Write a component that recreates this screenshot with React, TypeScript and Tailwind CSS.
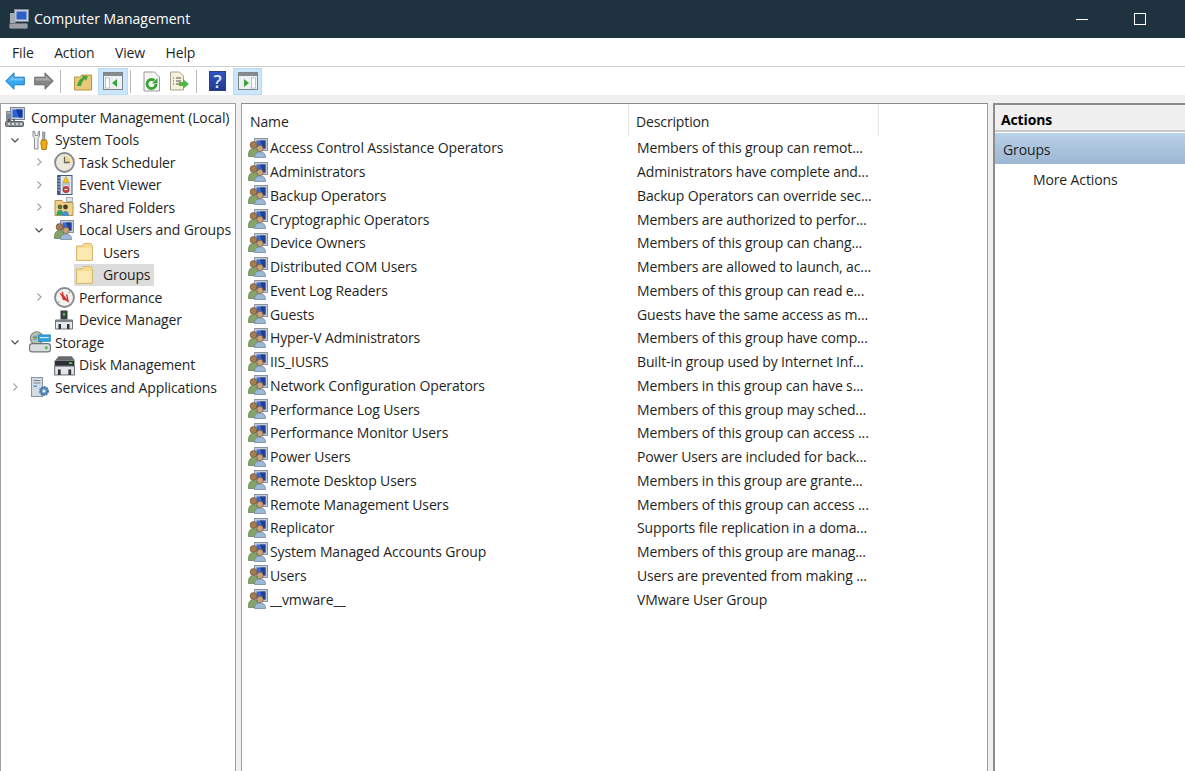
import type { ReactNode } from "react";

const font = { fontFamily: '"Open Sans", "Noto Sans", sans-serif' };

function Ico({ size = 20, children }: { size?: number; children: ReactNode }) {
  return (
    <svg width={size} height={size} viewBox="0 0 20 20" className="shrink-0">
      {children}
    </svg>
  );
}

function ComputerIcon() {
  return (
    <Ico>
      <rect x="5.5" y="0.5" width="14" height="12" fill="#c9d0d8" stroke="#7c8694" />
      <rect x="7.5" y="2.5" width="10" height="8" fill="#2d62d6" />
      <path d="M11 2.5h6.5v8H14z" fill="#173a9e" />
      <rect x="1" y="4" width="5.5" height="10" fill="#7f8b92" />
      <rect x="2" y="5.5" width="3.5" height="1" fill="#c4ccd2" />
      <path d="M4 12v3M9 12v3" stroke="#323b42" strokeWidth="1.2" />
      <rect x="0.5" y="14.5" width="18" height="5" rx="1" fill="#868d92" stroke="#596268" />
      <path d="M3 17h2M7 17h2M11 17h2M15 17h2" stroke="#eef1f3" strokeWidth="1.5" />
    </Ico>
  );
}

function GroupIcon({ size = 20 }: { size?: number }) {
  return (
    <Ico size={size}>
      <rect x="6.5" y="0.5" width="13" height="12" fill="#c6ccd4" stroke="#8a94a0" />
      <rect x="8.5" y="2.5" width="9" height="8" fill="#3a68cf" />
      <path d="M12 2.5h5.500v8H15z" fill="#22408f" />
      <circle cx="5.500" cy="7" r="3.400" fill="#a67c52" stroke="#6e5236" strokeWidth="0.7" />
      <path d="M0.500 17c0-4.500 2-6.500 5-6.500s5 2 5 6.500v1.500h-10z" fill="#86a468" stroke="#5d7a45" strokeWidth="0.7" />
      <circle cx="12" cy="10.500" r="3.200" fill="#cfa27a" stroke="#6e5638" strokeWidth="0.7" />
      <path d="M6.500 19.500c0-4 2-5.500 5.500-5.500s5.500 1.500 5.500 5.500z" fill="#9db9d6" stroke="#637f9e" strokeWidth="0.7" />
    </Ico>
  );
}

function ToolsIcon() {
  return (
    <Ico>
      <path d="M3 1v5l1.500 2.500V19h3.500V8.500L9.500 6V1L8 2v3.500H5V2z" fill="#eceef0" stroke="#80868c" strokeWidth="0.9" />
      <rect x="12.600" y="2" width="2.400" height="8" fill="#a3a9af" stroke="#6e7479" strokeWidth="0.5" />
      <path d="M11.500 10h5l.7 3-1 6.500h-4.400l-1-6.500z" fill="#f1a80f" stroke="#a06c08" strokeWidth="0.8" />
    </Ico>
  );
}

function ClockIcon() {
  return (
    <Ico size={21}>
      <circle cx="10" cy="10" r="9" fill="#eee8d8" stroke="#868b91" strokeWidth="1.8" />
      <path d="M10 10V3.500a6.500 6.500 0 0 1 6.500 6.500z" fill="#f4d98a" />
      <path d="M10 4.500V10h5" fill="none" stroke="#60646a" strokeWidth="1.2" />
    </Ico>
  );
}

function EventIcon() {
  return (
    <Ico>
      <rect x="4" y="0.500" width="14" height="19" fill="#e3e7ec" stroke="#3f5a86" />
      <rect x="3" y="0.500" width="3.500" height="19" fill="#3f5a86" />
      <path d="M3 3h3M3 6h3M3 9h3M3 12h3M3 15h3" stroke="#c7d2e0" strokeWidth="0.8" />
      <path d="M8 9h8M8 11h2M14 11h2" stroke="#8f9aa8" />
      <path d="M12 1.500l3.200 6h-6.400z" fill="#f4c81c" stroke="#a38010" strokeWidth="0.5" />
      <circle cx="12" cy="14.500" r="3.200" fill="#c94646" stroke="#872828" strokeWidth="0.6" />
      <rect x="10.500" y="14" width="3" height="1" fill="#fff" />
    </Ico>
  );
}

function SharedIcon() {
  return (
    <Ico>
      <path d="M1 18.500V3.500h7l1 2h10v13z" fill="#efd28a" stroke="#b3934e" />
      <rect x="12.500" y="0.500" width="6" height="4" fill="#dfe4ea" stroke="#8b98a6" strokeWidth="0.7" />
      <circle cx="6" cy="10" r="2.400" fill="#5a6f3a" />
      <circle cx="11.500" cy="10" r="2.400" fill="#4a3a24" />
      <path d="M2.500 18c0-3 1-5 3.500-5s3.500 2 3.500 5z" fill="#35a06e" />
      <path d="M8 19c0-3 1-5 3.500-5s3.500 2 3.500 5z" fill="#4a90c6" />
    </Ico>
  );
}

function FolderIcon() {
  return (
    <Ico>
      <path d="M1.500 18.500V4h6l1.500-2.500h7L17.500 4v14.500z" fill="#f7dc92" stroke="#d4b96f" />
      <path d="M2.500 6h14v11.500h-14z" fill="#fbe9b2" />
    </Ico>
  );
}

function PerfIcon() {
  return (
    <Ico size={21}>
      <circle cx="10" cy="10" r="9" fill="#f5f3ee" stroke="#868b91" strokeWidth="1.8" />
      <path d="M5 5l5 3.500L15 15l-6-3z" fill="#d6302f" />
      <path d="M8 4.500l1 8M12 7l1.500 7" stroke="#d6302f" strokeWidth="1.3" />
      <path d="M15 4.500l-1 1M4 15l1-1" stroke="#6f9b6f" />
    </Ico>
  );
}

function DeviceIcon() {
  return (
    <Ico>
      <rect x="6.500" y="0.500" width="7" height="9" fill="#3b4145" />
      <rect x="9" y="3" width="2" height="2.500" fill="#5ecb4f" />
      <path d="M1.500 10h17v9h-17z" fill="#e5e7e9" stroke="#6e7378" />
      <rect x="2" y="10" width="16" height="2" fill="#7c8185" />
      <rect x="4.500" y="14" width="2.500" height="5" fill="#2f3438" />
      <rect x="13" y="14" width="2.500" height="5" fill="#2f3438" />
    </Ico>
  );
}

function StorageIcon() {
  return (
    <Ico size={22}>
      <circle cx="7" cy="6.500" r="5.800" fill="#b4c2b7" stroke="#7e8a82" />
      <circle cx="5.500" cy="6" r="2" fill="#77a086" />
      <path d="M8.500 3.500h11v6h-11z" fill="#2fa3e0" stroke="#2177a8" strokeWidth="0.6" />
      <path d="M10 6h8" stroke="#d5effa" />
      <rect x="0.500" y="11.500" width="19" height="7.500" rx="2.500" fill="#d7dcdf" stroke="#6c747a" />
      <rect x="14.500" y="14" width="2.400" height="2.400" fill="#4fc23c" />
    </Ico>
  );
}

function DiskIcon() {
  return (
    <Ico size={22}>
      <path d="M5 2h12l3 4H2z" fill="#666b6f" />
      <rect x="1.500" y="6" width="18" height="5" fill="#2c3033" />
      <rect x="14.500" y="7.500" width="3" height="1.600" fill="#55d04a" />
      <rect x="1.500" y="11" width="18" height="8" fill="#e3e5e7" stroke="#70757a" />
      <rect x="4.500" y="14" width="2.500" height="5" fill="#2f3438" />
      <rect x="14" y="14" width="2.500" height="5" fill="#2f3438" />
    </Ico>
  );
}

function ServicesIcon() {
  return (
    <Ico>
      <rect x="1.500" y="0.500" width="11" height="19" fill="#d5dbe1" stroke="#8693a0" />
      <path d="M3.500 3.500h7M3.500 6h7" stroke="#76838f" />
      <rect x="3.500" y="8.500" width="3.500" height="1.500" fill="#4e9ad8" />
      <circle cx="14" cy="14" r="4" fill="#5b8ec0" stroke="#41709e" strokeWidth="2" strokeDasharray="1.6 1" />
      <circle cx="14" cy="14" r="1.500" fill="#f0f4f8" />
    </Ico>
  );
}

function TreeChevron({ open }: { open: boolean }) {
  return (
    <svg width="10" height="10" viewBox="0 0 10 10" className="shrink-0">
      <path
        d={open ? "M1.5 3.5 5 7l3.5-3.5" : "M3.5 1.5 7 5 3.5 8.5"}
        fill="none"
        stroke={open ? "#4d4d4d" : "#a6a6a6"}
        strokeWidth="1.2"
      />
    </svg>
  );
}

type TreeItem = {
  label: string;
  indent: number;
  icon: ReactNode;
  toggle?: "open" | "closed";
  selected?: boolean;
};

const tree: TreeItem[] = [
  { label: "Computer Management (Local)", indent: 0, icon: <ComputerIcon /> },
  { label: "System Tools", indent: 1, icon: <ToolsIcon />, toggle: "open" },
  { label: "Task Scheduler", indent: 2, icon: <ClockIcon />, toggle: "closed" },
  { label: "Event Viewer", indent: 2, icon: <EventIcon />, toggle: "closed" },
  { label: "Shared Folders", indent: 2, icon: <SharedIcon />, toggle: "closed" },
  { label: "Local Users and Groups", indent: 2, icon: <GroupIcon />, toggle: "open" },
  { label: "Users", indent: 3, icon: <FolderIcon /> },
  { label: "Groups", indent: 3, icon: <FolderIcon />, selected: true },
  { label: "Performance", indent: 2, icon: <PerfIcon />, toggle: "closed" },
  { label: "Device Manager", indent: 2, icon: <DeviceIcon /> },
  { label: "Storage", indent: 1, icon: <StorageIcon />, toggle: "open" },
  { label: "Disk Management", indent: 2, icon: <DiskIcon /> },
  { label: "Services and Applications", indent: 1, icon: <ServicesIcon />, toggle: "closed" },
];

const indentClass = ["pl-[4px]", "pl-[9px]", "pl-[33px]", "pl-[73px]"];

const groups = [
  ["Access Control Assistance Operators", "Members of this group can remot..."],
  ["Administrators", "Administrators have complete and..."],
  ["Backup Operators", "Backup Operators can override sec..."],
  ["Cryptographic Operators", "Members are authorized to perfor..."],
  ["Device Owners", "Members of this group can chang..."],
  ["Distributed COM Users", "Members are allowed to launch, ac..."],
  ["Event Log Readers", "Members of this group can read e..."],
  ["Guests", "Guests have the same access as m..."],
  ["Hyper-V Administrators", "Members of this group have comp..."],
  ["IIS_IUSRS", "Built-in group used by Internet Inf..."],
  ["Network Configuration Operators", "Members in this group can have s..."],
  ["Performance Log Users", "Members of this group may sched..."],
  ["Performance Monitor Users", "Members of this group can access ..."],
  ["Power Users", "Power Users are included for back..."],
  ["Remote Desktop Users", "Members in this group are grante..."],
  ["Remote Management Users", "Members of this group can access ..."],
  ["Replicator", "Supports file replication in a doma..."],
  ["System Managed Accounts Group", "Members of this group are manag..."],
  ["Users", "Users are prevented from making ..."],
  ["__vmware__", "VMware User Group"],
];

function Arrow({ dir, fill, stroke }: { dir: "left" | "right"; fill: string; stroke: string }) {
  return (
    <svg width="20" height="18" viewBox="0 0 20 18" className={dir === "right" ? "-scale-x-100" : ""}>
      <path d="M0.7 9 9 0.8v4.4h10.3v7.6H9v4.4z" fill={fill} stroke={stroke} strokeLinejoin="round" />
      <path d="M3 9 8.5 3.6v2.6H18.5V8.5H6z" fill="#fff" opacity="0.3" />
    </svg>
  );
}

function ToolSep() {
  return <div className="h-[23px] w-px bg-[#b9b9b9]" />;
}

function PaneIcon({ side }: { side: "left" | "right" }) {
  return (
    <svg width="20" height="18" viewBox="0 0 20 18">
      <rect x="0.5" y="0.5" width="19" height="17" fill="#eef1f3" stroke="#7f8589" />
      <rect x="1" y="1" width="18" height="3" fill="#868b8f" />
      {side === "left" ? (
        <>
          <rect x="2.5" y="6" width="4" height="10" fill="#fff" stroke="#8aa2bd" strokeWidth="0.6" />
          <path d="M14 7v8l-5-4z" fill="#35a637" />
        </>
      ) : (
        <>
          <rect x="13.5" y="6" width="4" height="10" fill="#fff" stroke="#8aa2bd" strokeWidth="0.6" />
          <path d="M6 7v8l5-4z" fill="#35a637" />
        </>
      )}
    </svg>
  );
}

export default function App() {
  return (
    <div
      className="flex h-[771px] w-[1185px] flex-col overflow-hidden bg-white text-[14px] tracking-[-0.13px] text-[#1f1f1f]"
      style={font}
    >
      {/* title bar */}
      <div className="flex h-[38px] shrink-0 items-center bg-[#1f3240] pl-[9px] text-white">
        <svg width="20" height="20" viewBox="0 0 20 20">
          <rect x="5.5" y="0.5" width="14" height="12" fill="#c9d0d8" stroke="#7c8694" />
          <rect x="7.5" y="2.5" width="10" height="8" fill="#2d5fc8" />
          <rect x="1" y="4" width="5.5" height="10" fill="#a3acb3" />
          <rect x="0.5" y="14.5" width="18" height="5" rx="1" fill="#9aa1a6" stroke="#6d767c" />
        </svg>
        <span className="mb-px ml-[5px] tracking-normal">Computer Management</span>
        <div className="ml-auto mr-[39px] flex items-center gap-[46px]">
          <div className="h-px w-3 bg-white" />
          <div className="size-3 border border-white" />
        </div>
      </div>

      {/* menu */}
      <div className="flex h-[29px] shrink-0 items-center gap-[20.5px] border-b border-[#cfcfcf] pl-3">
        <span>File</span>
        <span>Action</span>
        <span>View</span>
        <span>Help</span>
      </div>

      {/* toolbar */}
      <div className="flex h-[29px] shrink-0 items-center border-b border-[#efefef] pl-[5px]">
        <Arrow dir="left" fill="#38a8f2" stroke="#1d7cc4" />
        <div className="w-[9px]" />
        <Arrow dir="right" fill="#868686" stroke="#6a6a6a" />
        <div className="ml-[6px] mr-[13px]">
          <ToolSep />
        </div>
        <svg width="18" height="19" viewBox="0 0 18 19">
          <path d="M0.5 18V5h6l1-2h10v15z" fill="#e9c877" stroke="#b6964d" />
          <path d="M3 14c1-5 3-7 6-8.500L8 3.500l6 .5-2 5-1-2c-2 1-3 3-4 7z" fill="#3fa63a" />
        </svg>
        <div className="ml-[6px] flex h-[27px] w-[30px] items-center justify-center border border-[#b9dcf6] bg-[#cce6fb]">
          <PaneIcon side="left" />
        </div>
        <div className="ml-[2px] mr-[12px]">
          <ToolSep />
        </div>
        <svg width="17" height="21" viewBox="0 0 17 21">
          <path d="M1 1h10.500l5 5v14H1z" fill="#f5f5f3" stroke="#9a9a9a" />
          <path d="M13 13a4.500 4.500 0 1 1-1.700-3.500" fill="none" stroke="#36a534" strokeWidth="2.8" />
          <path d="M14.500 7v5.500H9z" fill="#36a534" />
        </svg>
        <div className="w-[9px]" />
        <svg width="20" height="20" viewBox="0 0 20 20">
          <path d="M1.500 1h9l4 4v14h-13z" fill="#f6f0d6" stroke="#a8a390" />
          <path d="M4 7h1M7 7h5M4 10h1M7 10h5M4 13h1M7 13h3" stroke="#555" />
          <path d="M10 11h4V8l6 5-6 5v-3h-4z" fill="#4db848" />
        </svg>
        <div className="ml-[7px] mr-[12px]">
          <ToolSep />
        </div>
        <div className="flex h-[20px] w-[17px] items-center justify-center border border-[#2a3f82] bg-linear-to-b from-[#2f55c4] to-[#223a8e] text-[18px] font-semibold leading-none text-[#dfe6f7]">
          ?
        </div>
        <div className="ml-[7px] flex h-[27px] w-[29px] items-center justify-center border border-[#b9dcf6] bg-[#cce6fb]">
          <PaneIcon side="right" />
        </div>
      </div>

      {/* panes */}
      <div className="flex min-h-0 flex-1 gap-[5px] overflow-hidden bg-[#f0f0f0] pt-[7px]">
        {/* tree */}
        <div className="h-full w-[236px] shrink-0 border border-b-0 border-[#a0a0a0] bg-white pt-[2px]">
          {tree.map((t) => (
            <div key={t.label} className={`flex h-[22.5px] items-center ${indentClass[t.indent]}`}>
              {t.toggle ? <TreeChevron open={t.toggle === "open"} /> : t.indent === 1 || t.indent === 2 ? <div className="w-[10px]" /> : null}
              <div className={`flex h-[22.5px] items-center ${t.selected ? "bg-[#dcdcdc]" : ""}`}>
                <div className={`flex w-[20px] justify-center ${t.indent === 0 ? "" : t.indent === 3 ? "ml-[1px]" : "ml-[10px]"}`}>{t.icon}</div>
                <span className={`whitespace-nowrap ${t.indent === 0 ? "ml-[6px]" : t.indent === 3 ? "ml-[8px] pr-[4px]" : "ml-[5px]"}`}>
                  {t.label}
                </span>
              </div>
            </div>
          ))}
        </div>

        {/* list */}
        <div className="h-full w-[747px] shrink-0 border border-b-0 border-[#a0a0a0] border-t-[#8c8c8c] bg-white">
          <div className="flex h-[32px] items-center">
            <div className="flex h-full w-[387px] items-center border-r border-[#e5e5e5] pl-[8px] pt-[3px]">Name</div>
            <div className="flex h-full w-[250px] items-center border-r border-[#e5e5e5] pl-[7px] pt-[3px]">Description</div>
          </div>
          <div>
            {groups.map(([name, desc]) => (
              <div key={name} className="flex h-[23.75px] items-center">
                <div className="flex w-[387px] items-center pl-[6px]">
                  <GroupIcon />
                  <span className="ml-[2px] whitespace-nowrap">{name}</span>
                </div>
                <span className="whitespace-nowrap pl-[8px]">{desc}</span>
              </div>
            ))}
          </div>
        </div>

        {/* actions */}
        <div className="h-full min-w-0 flex-1 border-t-2 border-l-2 border-[#8c8c8c] bg-white">
          <div className="flex h-[27px] items-center border-b-2 border-[#c8c8c8] bg-[#f0f0f0] pl-[6px] pt-[4px] font-bold text-black">
            Actions
          </div>
          <div className="mt-px flex h-[31px] items-center bg-linear-to-b from-[#bad2e8] to-[#9bb6d4] pl-[8px] pt-[2px]">Groups</div>
          <div className="flex h-[30px] items-center pl-[38px]">More Actions</div>
        </div>
      </div>
    </div>
  );
}
